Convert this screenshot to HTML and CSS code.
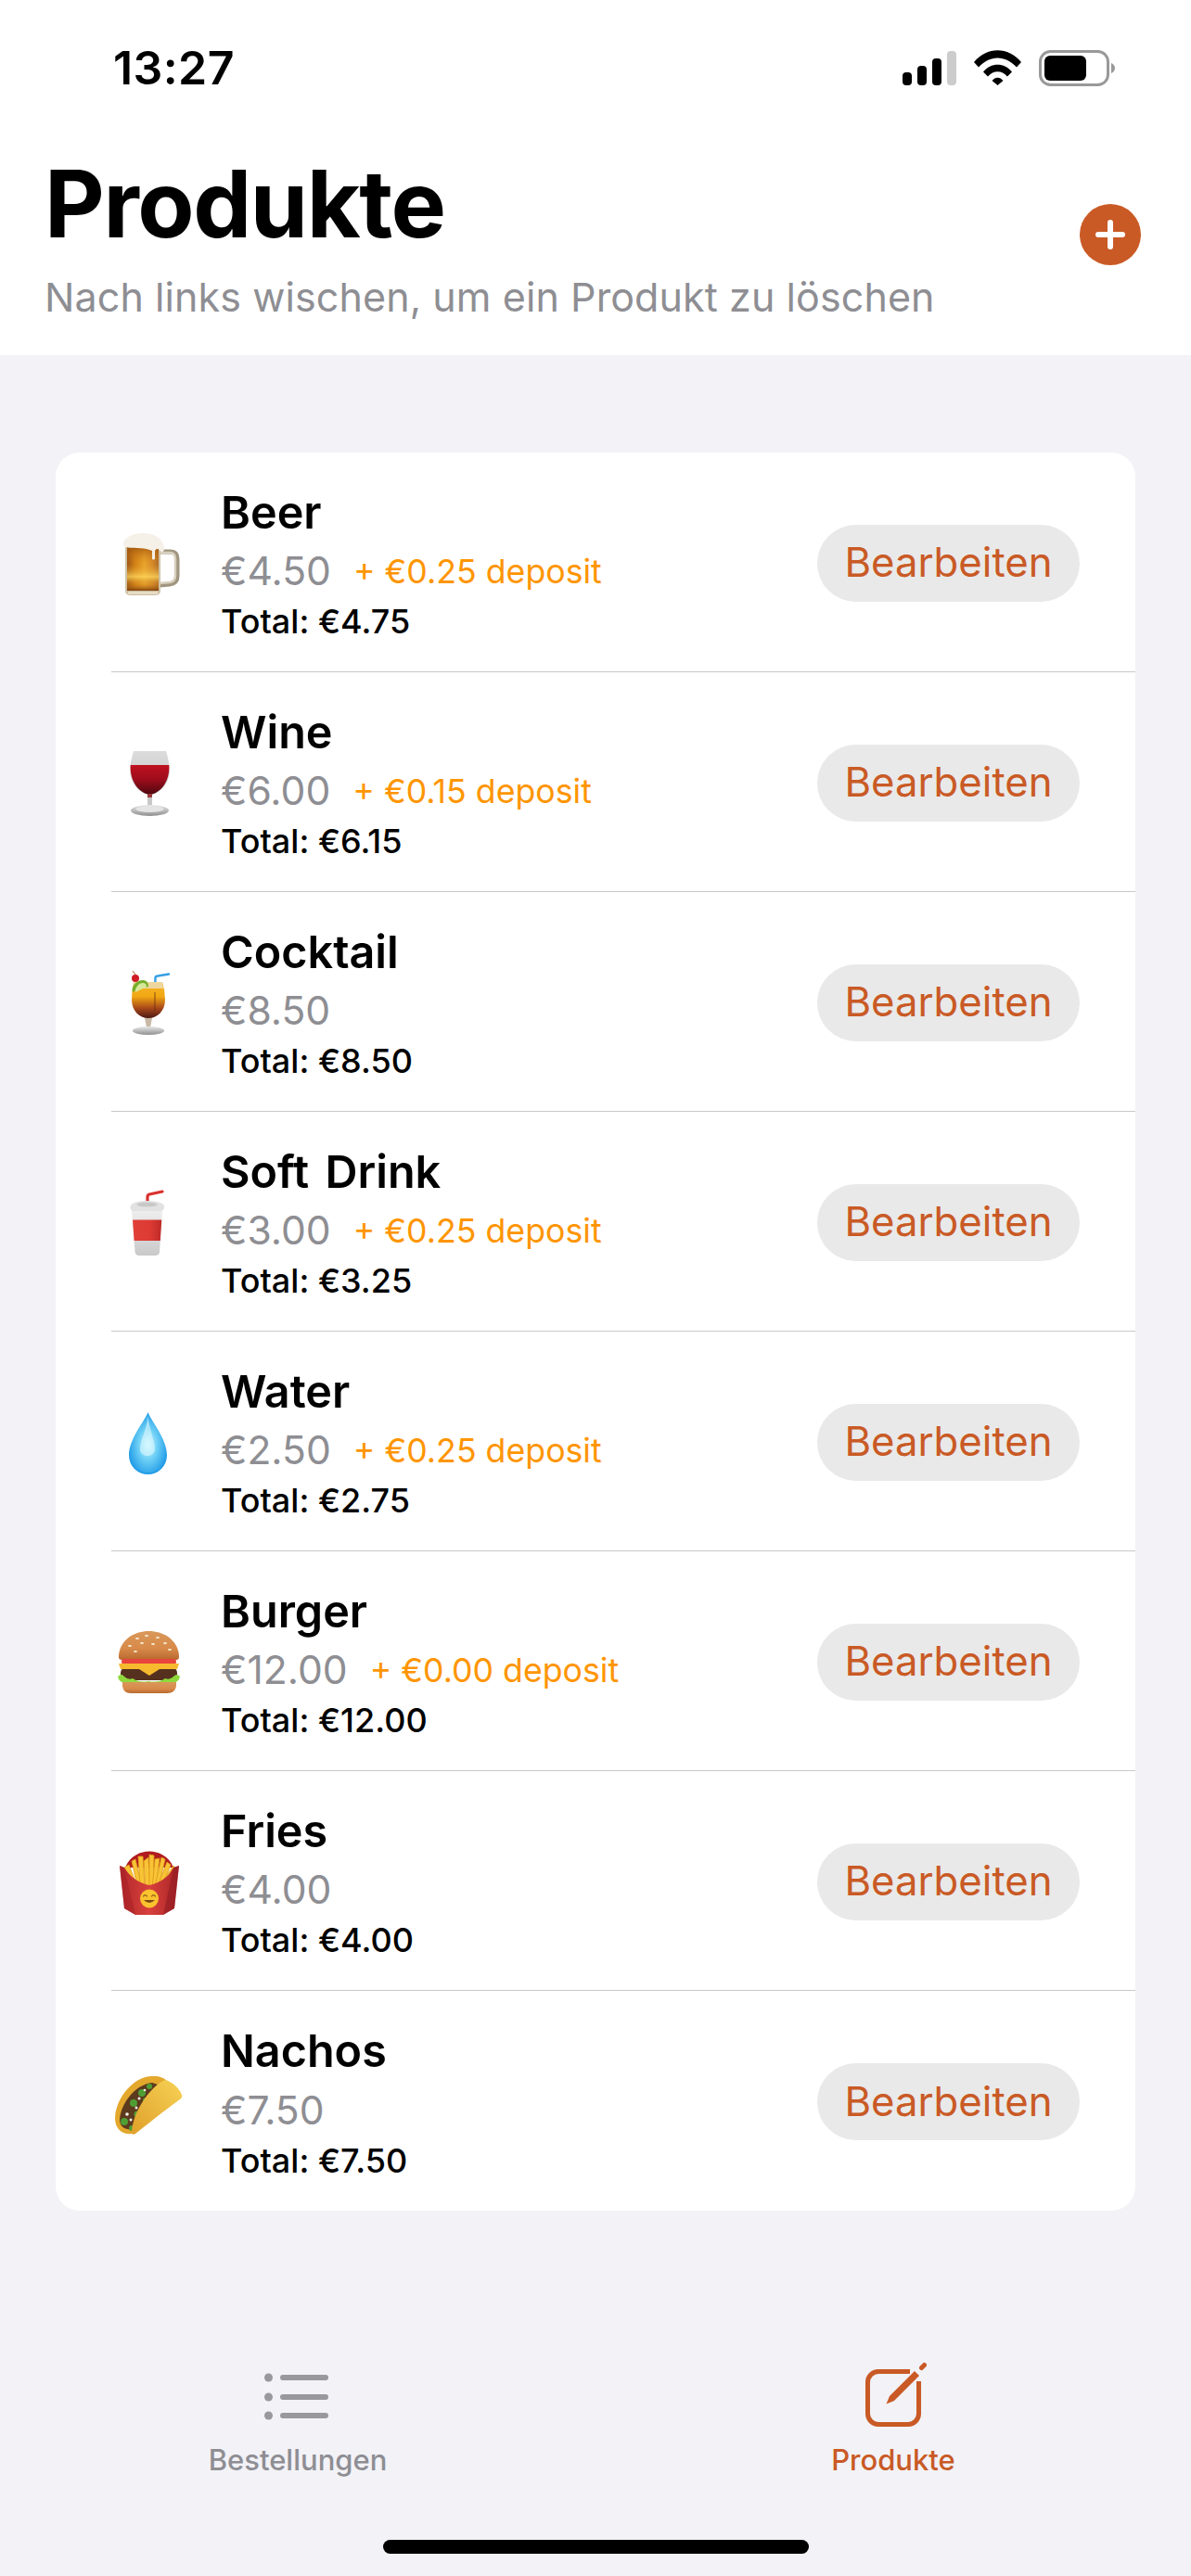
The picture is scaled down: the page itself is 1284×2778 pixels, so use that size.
FILE: index.html
```html
<!DOCTYPE html>
<html lang="de">
<head>
<meta charset="utf-8">
<title>Produkte</title>
<link rel="stylesheet" href="styles.css">
</head>
<body>
<svg class="defs" aria-hidden="true">
  <defs>
    <linearGradient id="gBeer" x1="0" x2="1" y1="0" y2="0"><stop offset="0" stop-color="#8f4a10"/><stop offset=".25" stop-color="#d27f14"/><stop offset=".55" stop-color="#eda92e"/><stop offset=".8" stop-color="#d68a2c"/><stop offset="1" stop-color="#a8682a"/></linearGradient>
    <linearGradient id="gBeerV" x1="0" x2="0" y1="0" y2="1"><stop offset="0" stop-color="#a2560f" stop-opacity=".85"/><stop offset=".38" stop-color="#d88a1c" stop-opacity=".15"/><stop offset=".68" stop-color="#ffdc60" stop-opacity=".75"/><stop offset=".85" stop-color="#d08520" stop-opacity=".35"/><stop offset="1" stop-color="#7a3e0c" stop-opacity=".95"/></linearGradient>
    <linearGradient id="gWine" x1="0" x2="0" y1="0" y2="1"><stop offset="0" stop-color="#c01020"/><stop offset=".5" stop-color="#9c0d1c"/><stop offset="1" stop-color="#4c0810"/></linearGradient>
    <linearGradient id="gGlass" x1="0" x2="0" y1="0" y2="1"><stop offset="0" stop-color="#dcdcdc"/><stop offset="1" stop-color="#c4c4c4"/></linearGradient>
    <linearGradient id="gBase" x1="0" x2="0" y1="0" y2="1"><stop offset="0" stop-color="#e8e8e8"/><stop offset="1" stop-color="#8f8f8f"/></linearGradient>
    <linearGradient id="gCock" x1="0" x2="0" y1="0" y2="1"><stop offset="0" stop-color="#f3b52a"/><stop offset=".4" stop-color="#f2a812"/><stop offset=".72" stop-color="#a8481a"/><stop offset="1" stop-color="#4c1a12"/></linearGradient>
    <linearGradient id="gCup" x1="0" x2="0" y1="0" y2="1"><stop offset="0" stop-color="#eeeeee"/><stop offset="1" stop-color="#c9c9c9"/></linearGradient>
    <linearGradient id="gRed" x1="0" x2="1" y1="0" y2="0"><stop offset="0" stop-color="#e04038"/><stop offset=".6" stop-color="#dd3a34"/><stop offset="1" stop-color="#bf2a28"/></linearGradient>
    <radialGradient id="gDrop" cx=".5" cy=".52" r=".55"><stop offset="0" stop-color="#c8f6ff"/><stop offset=".45" stop-color="#6fd0f6"/><stop offset="1" stop-color="#1b98e6"/></radialGradient>
    <linearGradient id="gBun" x1="0" x2="0" y1="0" y2="1"><stop offset="0" stop-color="#d9985a"/><stop offset=".6" stop-color="#d88a4a"/><stop offset="1" stop-color="#b8692f"/></linearGradient>
    <linearGradient id="gBox" x1="0" x2="1" y1="0" y2="0"><stop offset="0" stop-color="#b3282a"/><stop offset=".5" stop-color="#d8403c"/><stop offset="1" stop-color="#a92426"/></linearGradient>
    <linearGradient id="gShell" x1="0" x2="1" y1="1" y2="0"><stop offset="0" stop-color="#e0a02a"/><stop offset="1" stop-color="#f6d255"/></linearGradient>

    <symbol id="e-beer" viewBox="0 0 80 80">
      <path d="M52 29H64Q71 29 71 37V55Q71 63 63 64L52 65" fill="none" stroke="#a09680" stroke-width="5"/>
      <path d="M52 30H63Q69 30 69 37V55Q69 61 63 62L52 63" fill="none" stroke="#d8d0be" stroke-width="2.500"/>
      <path d="M15 24H53V71Q53 76 47 76H21Q15 76 15 71Z" fill="#cfc2a6"/>
      <rect x="17" y="24" width="34" height="47" fill="url(#gBeer)"/>
      <rect x="17" y="24" width="34" height="47" fill="url(#gBeerV)"/>
      <path d="M13 22C12 14 24 8 36 9C46 9 57 15 57 26C57 30 53 30 52 27C50 25 47 26 47 29V36C47 38 44 38 44 36V28C40 26 34 25 28 25C22 24 14 26 13 22Z" fill="#f5f1e8"/>
      <path d="M18 73.500H50" stroke="#efe6d2" stroke-width="2"/>
    </symbol>

    <symbol id="e-wine" viewBox="0 0 80 80">
      <path d="M24 7H59Q63 20 62.800 29C62 43 52 53 41.500 54C31 53 21 43 20.200 29Q20 20 24 7Z" fill="url(#gGlass)"/>
      <path d="M20.700 22H62.300C63.500 40 52 53 41.500 54C31 53 19.500 40 20.700 22Z" fill="url(#gWine)"/>
      <rect x="39" y="53" width="5" height="14" fill="#c8c8c8"/>
      <rect x="39" y="53" width="5" height="4" fill="#9a3a3c"/>
      <ellipse cx="41.500" cy="71" rx="20.500" ry="6" fill="url(#gBase)"/>
      <ellipse cx="41.500" cy="69.500" rx="15" ry="3.500" fill="#e4e4e4"/>
    </symbol>

    <symbol id="e-cocktail" viewBox="0 0 80 80">
      <path d="M47 30L47.500 14Q48 12.500 50 12.500L62 10.500" fill="none" stroke="#35a0e4" stroke-width="2.400" stroke-linecap="round"/>
      <path d="M24 19H55Q58 28 58 38C58 50 50 58 40 58C30 58 22 50 22 38Q22 28 24 19Z" fill="url(#gCock)"/>
      <path d="M24 19H55L56 26H23Z" fill="#ece3c8" opacity=".75"/>
      <path d="M47 30V50" stroke="#5c2812" stroke-width="1.200" opacity=".6"/>
      <path d="M23 30C21 24 27 17 34 17C39 17 40 21 40 24L30 26Z" fill="#74ae2c"/>
      <path d="M26 30C25 25 30 20 34 20C37 20 38 22 38 24Z" fill="#d8e89a"/>
      <circle cx="26" cy="15" r="4" fill="#d01c24"/>
      <path d="M26 11L23 7" stroke="#a8622c" stroke-width="1"/>
      <path d="M36 58L38 68H42L44 58Z" fill="#c9b9a4"/>
      <ellipse cx="40" cy="71.500" rx="17" ry="4.500" fill="url(#gBase)"/>
    </symbol>

    <symbol id="e-soda" viewBox="0 0 80 80">
      <path d="M39 24V14Q39 11.500 41 11L55 8" fill="none" stroke="#d9322e" stroke-width="3.200" stroke-linecap="round"/>
      <path d="M22 28H55L52 73Q52 77 47 77H30Q26 77 25.500 73Z" fill="url(#gCup)"/>
      <path d="M23 38.500H54.300L52.800 61H24.600Z" fill="url(#gRed)"/>
      <path d="M23 21Q28 18 38.500 18Q50 18 55 21Q58 23 57 26Q56 29 53 29H25Q21 29 20.500 26Q20 23 23 21Z" fill="#e2e2e2"/>
      <ellipse cx="38.500" cy="22" rx="11" ry="2.500" fill="#c8c8c8"/>
    </symbol>

    <symbol id="e-water" viewBox="0 0 80 80">
      <path d="M39.500 9C44 20 60 38 60 55.500A20.500 20.500 0 0 1 19 55.500C19 38 35 20 39.500 9Z" fill="url(#gDrop)"/>
      <path d="M39.500 13C41 28 48 42 47 50C45 58 33 58 31 50C30 42 38 28 39.500 13Z" fill="#e6fcff" opacity=".55"/>
      <path d="M19.600 60A20.500 20.500 0 0 0 59.400 60C56 70 48 74 39.500 74C31 74 23 70 19.600 60Z" fill="#1594e2" opacity=".6"/>
    </symbol>

    <symbol id="e-burger" viewBox="0 0 80 80">
      <path d="M8 36C8 20 22 8 40.500 8C59 8 73 20 73 36Q73 39 70 39H11Q8 39 8 36Z" fill="url(#gBun)"/>
      <g fill="#f8ecd4"><ellipse cx="28" cy="16" rx="2" ry="1.100"/><ellipse cx="38" cy="13" rx="2" ry="1.100"/><ellipse cx="50" cy="15" rx="2" ry="1.100"/><ellipse cx="20" cy="24" rx="2" ry="1.100"/><ellipse cx="33" cy="21" rx="2" ry="1.100"/><ellipse cx="45" cy="22" rx="2" ry="1.100"/><ellipse cx="58" cy="21" rx="2" ry="1.100"/><ellipse cx="63" cy="28" rx="2" ry="1.100"/><ellipse cx="26" cy="30" rx="2" ry="1.100"/></g>
      <rect x="11" y="38" width="59" height="6" rx="3" fill="#e8453c"/>
      <rect x="10" y="47" width="61" height="14" rx="6" fill="#56301e"/>
      <path d="M8 43H73L71 49L52 49L41 56L30 49L10 49Z" fill="#f7b92e"/>
      <path d="M7 57Q11 53 14 57Q18 61 23 59Q30 64 40 62Q52 64 58 59Q63 61 67 57Q71 53 74 57Q73 63 66 64H15Q8 63 7 57Z" fill="#8fd83c"/>
      <path d="M12 63H70Q71 75 60 75H21Q11 75 12 63Z" fill="url(#gBun)"/>
    </symbol>

    <symbol id="e-fries" viewBox="0 0 80 80">
      <path d="M15 26C20 13 32 8.500 41 8.500C50 8.500 62 13 67 26Z" fill="#b01c20"/>
      <g fill="#f8c436" stroke="#e09a1a" stroke-width=".8">
        <path d="M14 26L19 23L27 44H22Z"/><path d="M22 19L26 17L33 46H28Z"/><path d="M29 14L34 14L36 46H31Z"/><path d="M35 19L40 15L42 50H37Z"/><path d="M41 12L46 13L45 50H41Z"/><path d="M47 17L52 16L48 50H44Z"/><path d="M54 15L58 17L51 47H47Z"/><path d="M60 20L64 23L55 46H50Z"/><path d="M67 24L69 27L57 44H53Z"/>
      </g>
      <path d="M9 24L14 26C20 36 30 43 41 45C52 43 62 36 67 26L73 24L68 70L56 77H26L14 70Z" fill="url(#gBox)"/>
      <path d="M9 24L14 26L26 77L14 70Z" fill="#a62026" opacity=".55"/>
      <path d="M73 24L67 26L56 77L68 70Z" fill="#8e1c22" opacity=".55"/>
      <circle cx="41" cy="59.500" r="10" fill="#f9c22e"/>
      <path d="M34.500 57Q36.500 54.500 38.500 57M43.500 57Q45.500 54.500 47.500 57" fill="none" stroke="#7a4a14" stroke-width="1.100" stroke-linecap="round"/>
      <path d="M35 61Q41 67 47 61Z" fill="#7a4a14"/>
    </symbol>

    <symbol id="e-taco" viewBox="0 0 80 80">
      <path d="M4 58C5 34 27 11 46 13C52 13 57 15 60 18L24 75C12 77 4 70 4 58Z" fill="#e3a82c"/>
      <path d="M9 60C10 42 26 22 44 20L50 22L26 70C16 72 9 68 9 60Z" fill="#5c3a1e"/>
      <g fill="#4f9e34"><circle cx="33" cy="31" r="4"/><circle cx="41" cy="24" r="3"/><circle cx="24" cy="42" r="4"/><circle cx="14" cy="62" r="4"/><circle cx="28" cy="54" r="3.500"/><circle cx="22" cy="69" r="3"/><circle cx="37" cy="39" r="3"/></g>
      <g fill="#f4f4ec"><circle cx="30" cy="37" r="1.500"/><circle cx="17" cy="54" r="1.800"/><circle cx="21" cy="60" r="1.500"/><circle cx="27" cy="47" r="1.500"/><circle cx="36" cy="28" r="1.300"/></g>
      <path d="M58 17C66 19 74 27 76 33Q77 36 74 38C60 48 40 64 26 75Q23 77 22 74C22 55 40 25 58 17Z" fill="url(#gShell)"/>
    </symbol>
  </defs>
</svg>

<header class="header">
  <div class="status">
    <span class="time">13:27</span>
    <div class="status-icons">
      <svg class="ic-signal" viewBox="0 0 58 37" aria-hidden="true">
        <rect x="0" y="23" width="10" height="14" rx="4" fill="#000"/>
        <rect x="16" y="16" width="10" height="21" rx="4" fill="#000"/>
        <rect x="32" y="8" width="10" height="29" rx="4" fill="#000"/>
        <rect x="48" y="0" width="10" height="37" rx="4" fill="#ccc"/>
      </svg>
      <svg class="ic-wifi" viewBox="0 0 51 38" aria-hidden="true">
        <path d="M0 13C14-4 37-4 51 13L46 18.500C34 5 17 5 5 18.500Z"/>
        <path d="M10 23.500C18 13 33 13 41 23.500L36 28.500C30 21.500 21 21.500 15 28.500Z"/>
        <path d="M19.500 33C23 28.500 28 28.500 31.500 33L25.500 38Z"/>
      </svg>
      <svg class="ic-battery" viewBox="0 0 82 39" aria-hidden="true">
        <rect x="1.500" y="1.500" width="73" height="36" rx="11" fill="none" stroke="#999" stroke-width="3"/>
        <rect x="6" y="6" width="45" height="27" rx="6" fill="#000"/>
        <path d="M78 14Q82 16 82 19.500Q82 23 78 25Z" fill="#999"/>
      </svg>
    </div>
  </div>
  <div class="title-row">
    <div class="title-block">
      <h1 class="title">Produkte</h1>
      <p class="subtitle">Nach links wischen, um ein Produkt zu löschen</p>
    </div>
    <svg class="add" viewBox="0 0 66 66" role="img" aria-label="Hinzufügen">
      <circle cx="33" cy="33" r="33" fill="#c95a25"/>
      <path d="M33 20V46M20 33H46" stroke="#fff" stroke-width="6" stroke-linecap="round"/>
    </svg>
  </div>
</header>

<main class="card">
  <section class="row"><div class="row-body">
    <svg class="emoji"><use href="#e-beer"/></svg>
    <div class="info">
      <div class="name">Beer</div>
      <div class="price-line"><span class="price">€4.50</span><span class="deposit">+ €0.25 deposit</span></div>
      <div class="total">Total: €4.75</div>
    </div>
    <div class="edit">Bearbeiten</div>
  </div></section>
  <section class="row"><div class="row-body">
    <svg class="emoji"><use href="#e-wine"/></svg>
    <div class="info">
      <div class="name">Wine</div>
      <div class="price-line"><span class="price">€6.00</span><span class="deposit">+ €0.15 deposit</span></div>
      <div class="total">Total: €6.15</div>
    </div>
    <div class="edit">Bearbeiten</div>
  </div></section>
  <section class="row"><div class="row-body">
    <svg class="emoji"><use href="#e-cocktail"/></svg>
    <div class="info">
      <div class="name">Cocktail</div>
      <div class="price-line"><span class="price">€8.50</span></div>
      <div class="total">Total: €8.50</div>
    </div>
    <div class="edit">Bearbeiten</div>
  </div></section>
  <section class="row"><div class="row-body">
    <svg class="emoji"><use href="#e-soda"/></svg>
    <div class="info">
      <div class="name">Soft Drink</div>
      <div class="price-line"><span class="price">€3.00</span><span class="deposit">+ €0.25 deposit</span></div>
      <div class="total">Total: €3.25</div>
    </div>
    <div class="edit">Bearbeiten</div>
  </div></section>
  <section class="row"><div class="row-body">
    <svg class="emoji"><use href="#e-water"/></svg>
    <div class="info">
      <div class="name">Water</div>
      <div class="price-line"><span class="price">€2.50</span><span class="deposit">+ €0.25 deposit</span></div>
      <div class="total">Total: €2.75</div>
    </div>
    <div class="edit">Bearbeiten</div>
  </div></section>
  <section class="row"><div class="row-body">
    <svg class="emoji"><use href="#e-burger"/></svg>
    <div class="info">
      <div class="name">Burger</div>
      <div class="price-line"><span class="price">€12.00</span><span class="deposit">+ €0.00 deposit</span></div>
      <div class="total">Total: €12.00</div>
    </div>
    <div class="edit">Bearbeiten</div>
  </div></section>
  <section class="row"><div class="row-body">
    <svg class="emoji"><use href="#e-fries"/></svg>
    <div class="info">
      <div class="name">Fries</div>
      <div class="price-line"><span class="price">€4.00</span></div>
      <div class="total">Total: €4.00</div>
    </div>
    <div class="edit">Bearbeiten</div>
  </div></section>
  <section class="row row-last"><div class="row-body">
    <svg class="emoji"><use href="#e-taco"/></svg>
    <div class="info">
      <div class="name">Nachos</div>
      <div class="price-line"><span class="price">€7.50</span></div>
      <div class="total">Total: €7.50</div>
    </div>
    <div class="edit">Bearbeiten</div>
  </div></section>
</main>

<nav class="tabs">
  <div class="tab">
    <svg class="tab-icon" viewBox="0 0 72 70" aria-hidden="true" fill="#98989d">
      <circle cx="4.500" cy="17" r="4.500"/><circle cx="4.500" cy="38" r="4.500"/><circle cx="4.500" cy="58" r="4.500"/>
      <rect x="17" y="14" width="52" height="6" rx="3"/><rect x="17" y="35" width="52" height="6" rx="3"/><rect x="17" y="55" width="52" height="6" rx="3"/>
    </svg>
    <span class="tab-label">Bestellungen</span>
  </div>
  <div class="tab tab-active">
    <svg class="tab-icon" viewBox="7 7 72 70" aria-hidden="true">
      <path d="M61 17.500H27A11.500 11.500 0 0 0 15.500 29V63A11.500 11.500 0 0 0 27 74.500H59A11.500 11.500 0 0 0 70.500 63V28" fill="none" stroke="#c95a25" stroke-width="5"/>
      <path d="M35.500 52.500L39 44L66 17L71 22L44 49Z" fill="#c95a25"/>
      <path d="M73.500 13.500L76.500 10.500" stroke="#c95a25" stroke-width="5" stroke-linecap="round"/>
    </svg>
    <span class="tab-label">Produkte</span>
  </div>
</nav>
<div class="home-indicator"></div>
</body>
</html>
```

FILE: styles.css
```css
* { box-sizing: border-box; }

html, body { margin: 0; padding: 0; }

body {
  width: 1284px;
  height: 2778px;
  overflow: hidden;
  background: #f2f2f7;
  font-family: Inter, "Noto Sans", sans-serif;
  color: #000;
}

.defs { display: block; width: 0; height: 0; }

.header {
  height: 383px;
  padding-top: 43px;
  background: #fff;
}

.status {
  display: flex;
  justify-content: space-between;
  align-items: center;
  height: 60px;
  padding: 0 82px 0 122px;
}

.time {
  font-size: 50px;
  line-height: 60px;
  font-weight: 600;
  letter-spacing: 0.4px;
}

.status-icons {
  display: flex;
  align-items: center;
  gap: 19px;
}

.ic-signal { width: 58px; height: 37px; }
.ic-wifi { width: 51px; height: 38px; }
.ic-battery { width: 82px; height: 39px; }

.title-row {
  display: flex;
  justify-content: space-between;
  align-items: flex-start;
  margin-top: 62px;
  padding: 0 54px 0 48px;
}

.title {
  margin: 0;
  font-size: 100px;
  line-height: 110px;
  font-weight: 700;
  letter-spacing: -1.4px;
}

.subtitle {
  margin: 20px 0 0;
  font-size: 43px;
  line-height: 50px;
  font-weight: 400;
  letter-spacing: 0.09px;
  color: #8e8e93;
}

.add {
  width: 66px;
  height: 66px;
  margin-top: 55px;
}

.card {
  margin: 105px 60px 0;
  background: #fff;
  border-radius: 26px;
}

.row {
  height: 237px;
  padding-left: 60px;
}

.row-body {
  display: flex;
  align-items: center;
  height: 100%;
  padding-right: 60px;
  border-bottom: 1px solid #c8c8ca;
}

.row-last .row-body { border-bottom: 0; }

.emoji {
  flex: none;
  width: 80px;
  height: 80px;
  margin-right: 38px;
}

.info {
  flex: 1;
  margin-top: 4px;
}

.name {
  font-size: 48.5px;
  line-height: 56px;
  font-weight: 600;
  word-spacing: 5px;
}

.price-line {
  display: flex;
  align-items: center;
  gap: 24px;
  height: 50px;
  margin-top: 10.5px;
}

.price {
  font-size: 42.6px;
  line-height: 50px;
  color: #8e8e93;
}

.deposit {
  font-size: 35.7px;
  line-height: 50px;
  color: #ff9500;
}

.total {
  margin-top: 8.3px;
  font-size: 36px;
  line-height: 42px;
  font-weight: 500;
}

.edit {
  flex: none;
  display: flex;
  align-items: center;
  justify-content: center;
  width: 283px;
  height: 83px;
  margin-top: 2px;
  border-radius: 42px;
  background: #e9e9e9;
  color: #c95a25;
  font-size: 43.7px;
  line-height: 50px;
}

.tabs {
  display: grid;
  grid-template-columns: 1fr 1fr;
  margin-top: 163px;
}

.tab {
  display: flex;
  flex-direction: column;
  align-items: center;
  color: #8e8e93;
}

.tab-active { color: #c95a25; }

.tab-icon { width: 72px; height: 70px; }

.tab-label {
  margin-top: 18px;
  font-size: 31px;
  line-height: 36px;
  font-weight: 500;
}

.home-indicator {
  width: 459px;
  height: 15px;
  margin: 68px auto 0;
  border-radius: 8px;
  background: #000;
}
```
